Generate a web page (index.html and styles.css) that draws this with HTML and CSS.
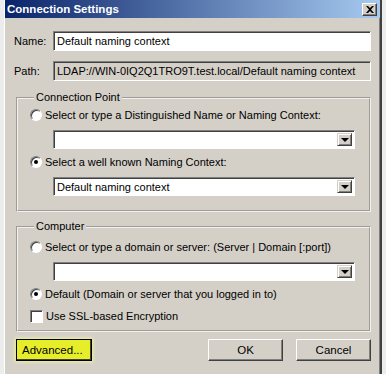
FILE: index.html
```html
<!DOCTYPE html>
<html lang="en">
<head>
    <meta charset="UTF-8">
    <title>Connection Settings</title>
    <link rel="stylesheet" href="styles.css">
</head>
<body>
    <div class="window">
        <div class="titlebar">
            <span class="title">Connection Settings</span>
            <button class="close-btn">
                <svg viewBox="0 0 8 7" width="8" height="7">
                    <path d="M0 0h2l2 2 2-2h2L5 3.5 8 7H6L4 5 2 7H0l3-3.5z"/>
                </svg>
            </button>
        </div>

        <div class="content">
            <div class="field-row">
                <label class="field-label">Name:</label>
                <div class="textbox">Default naming context</div>
            </div>
            <div class="field-row path-row">
                <label class="field-label">Path:</label>
                <div class="textbox readonly">LDAP://WIN-0IQ2Q1TRO9T.test.local/Default naming context</div>
            </div>

            <fieldset class="groupbox group-connection">
                <legend>Connection Point</legend>
                <div class="option">
                    <span class="radio"></span>
                    <span>Select or type a Distinguished Name or Naming Context:</span>
                </div>
                <div class="combo">
                    <span class="combo-text"></span>
                    <span class="combo-arrow"><i></i></span>
                </div>
                <div class="option">
                    <span class="radio checked"></span>
                    <span>Select a well known Naming Context:</span>
                </div>
                <div class="combo">
                    <span class="combo-text">Default naming context</span>
                    <span class="combo-arrow"><i></i></span>
                </div>
            </fieldset>

            <fieldset class="groupbox group-computer">
                <legend>Computer</legend>
                <div class="option">
                    <span class="radio"></span>
                    <span>Select or type a domain or server: (Server | Domain [:port])</span>
                </div>
                <div class="combo">
                    <span class="combo-text"></span>
                    <span class="combo-arrow"><i></i></span>
                </div>
                <div class="option">
                    <span class="radio checked"></span>
                    <span>Default (Domain or server that you logged in to)</span>
                </div>
                <div class="option check-option">
                    <span class="checkbox"></span>
                    <span>Use SSL-based Encryption</span>
                </div>
            </fieldset>

            <div class="button-row">
                <button class="win-btn highlight">Advanced...</button>
                <div class="button-group">
                    <button class="win-btn">OK</button>
                    <button class="win-btn">Cancel</button>
                </div>
            </div>
        </div>
    </div>
</body>
</html>
```

FILE: styles.css
```css
* {
    margin: 0;
    padding: 0;
    box-sizing: border-box;
}

body {
    font-family: "Liberation Sans", Arial, sans-serif;
    font-size: 11px;
    color: #000;
    background: #ececec;
    height: 374px;
    overflow: hidden;
}

.window {
    margin-left: 4px;
    width: 378px;
    height: 374px;
    background: #d4d0c8;
    border-left: 1px solid #ffffff;
    border-right: 2px solid #404040;
    box-shadow: inset -1px 0 0 #808080;
}

/* title bar */
.titlebar {
    height: 18px;
    display: flex;
    align-items: center;
    justify-content: space-between;
    padding: 0 3px 0 2px;
    background: linear-gradient(to right, #0a246a, #a6caf0);
}

.title {
    color: #fff;
    font-weight: bold;
    font-size: 11.5px;
}

.close-btn {
    width: 15px;
    height: 13px;
    background: #d4d0c8;
    border: 1px solid;
    border-color: #fff #404040 #404040 #fff;
    box-shadow: inset -1px -1px 0 #808080;
    display: flex;
    align-items: center;
    justify-content: center;
}

.close-btn svg {
    fill: #000;
}

.content {
    padding: 13px 9px 0 9px;
}

/* name / path */
.field-row {
    display: flex;
    align-items: center;
}

.field-label {
    width: 39px;
}

.textbox {
    flex: 1;
    height: 20px;
    background: #fff;
    border: 1px solid;
    border-color: #808080 #fff #fff #808080;
    box-shadow: inset 1px 1px 0 #404040;
    padding: 0 3px;
    display: flex;
    align-items: center;
    white-space: nowrap;
    overflow: hidden;
}

.textbox.readonly {
    background: #d4d0c8;
}

.path-row {
    margin-top: 10px;
}

/* group boxes */
.groupbox {
    margin-left: 2px;
    border: 2px groove #f2f1ec;
    padding: 3px 14px 9px 12px;
}

.groupbox legend {
    padding: 0 2px;
    margin-left: 4px;
    line-height: 13px;
}

.group-connection {
    margin-top: 10px;
}

.group-computer {
    margin-top: 8px;
    padding-top: 6px;
    padding-bottom: 6px;
}

.option {
    display: flex;
    align-items: center;
    gap: 3px;
    height: 16px;
    white-space: nowrap;
}

.radio {
    flex: none;
    width: 12px;
    height: 12px;
    border-radius: 50%;
    background: #fff;
    border: 1px solid;
    border-color: #808080 #fff #fff #808080;
    box-shadow: inset 1px 1px 0 #404040;
    position: relative;
}

.radio.checked::after {
    content: "";
    position: absolute;
    left: 3px;
    top: 3px;
    width: 4px;
    height: 4px;
    border-radius: 50%;
    background: #000;
}

.checkbox {
    flex: none;
    width: 13px;
    height: 13px;
    background: #fff;
    border: 1px solid;
    border-color: #808080 #fff #fff #808080;
    box-shadow: inset 1px 1px 0 #404040;
}

.check-option {
    margin-top: 6px;
}

/* combo boxes */
.combo {
    display: flex;
    height: 19px;
    margin: 7px 0 5px 23px;
    background: #fff;
    border: 1px solid;
    border-color: #808080 #fff #fff #808080;
    box-shadow: inset 1px 1px 0 #404040;
    padding: 2px 2px 2px 3px;
}

.combo-text {
    flex: 1;
    display: flex;
    align-items: center;
    white-space: nowrap;
}

.combo-arrow {
    width: 15px;
    background: #d4d0c8;
    border: 1px solid;
    border-color: #d4d0c8 #404040 #404040 #d4d0c8;
    box-shadow: inset 1px 1px 0 #fff, inset -1px -1px 0 #808080;
    display: flex;
    align-items: center;
    justify-content: center;
}

.combo-arrow i {
    width: 0;
    height: 0;
    border-left: 4px solid transparent;
    border-right: 4px solid transparent;
    border-top: 4px solid #000;
    margin-top: 1px;
}

/* buttons */
.button-row {
    display: flex;
    justify-content: space-between;
    margin-top: 7px;
    padding-left: 2px;
}

.button-group {
    display: flex;
    gap: 13px;
}

.win-btn {
    width: 75px;
    height: 22px;
    font-family: inherit;
    font-size: 11.5px;
    background: #d4d0c8;
    border: 1px solid;
    border-color: #fff #404040 #404040 #fff;
    box-shadow: inset -1px -1px 0 #808080;
}

.win-btn.highlight {
    width: 76px;
    background: #e6ee2a;
    border-color: #000;
    box-shadow: inset -1px -1px 0 #404040, 0 0 3px 1px #eef39a;
    text-align: left;
    padding-left: 5px;
}
```
